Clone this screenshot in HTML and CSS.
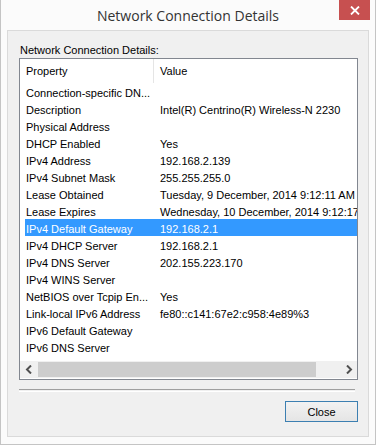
FILE: index.html
```html
<!DOCTYPE html>
<html lang="en">
<head>
  <meta charset="UTF-8" />
  <title>Network Connection Details</title>
  <link rel="stylesheet" href="styles.css">
</head>
<body>
  <div class="window">

    <!-- Title bar -->
    <div class="titlebar">
      <span class="title">Network Connection Details</span>
      <div class="close-x">
        <svg width="10" height="9" viewBox="0 0 10 9"><path d="M1 0.5 L9 8.5 M9 0.5 L1 8.5" stroke="#fff" stroke-width="1.8"/></svg>
      </div>
    </div>

    <!-- Client area -->
    <div class="client">
      <div class="label">Network Connection Details:</div>

      <div class="listview">
        <div class="lv-header">
          <div class="col-prop">Property</div>
          <div class="col-val">Value</div>
        </div>
        <div class="lv-body">
          <div class="row"><div class="col-prop">Connection-specific DN...</div><div class="col-val"></div></div>
          <div class="row"><div class="col-prop">Description</div><div class="col-val">Intel(R) Centrino(R) Wireless-N 2230</div></div>
          <div class="row"><div class="col-prop">Physical Address</div><div class="col-val"></div></div>
          <div class="row"><div class="col-prop">DHCP Enabled</div><div class="col-val">Yes</div></div>
          <div class="row"><div class="col-prop">IPv4 Address</div><div class="col-val">192.168.2.139</div></div>
          <div class="row"><div class="col-prop">IPv4 Subnet Mask</div><div class="col-val">255.255.255.0</div></div>
          <div class="row"><div class="col-prop">Lease Obtained</div><div class="col-val">Tuesday, 9 December, 2014 9:12:11 AM</div></div>
          <div class="row"><div class="col-prop">Lease Expires</div><div class="col-val">Wednesday, 10 December, 2014 9:12:17</div></div>
          <div class="row selected"><div class="col-prop">IPv4 Default Gateway</div><div class="col-val">192.168.2.1</div></div>
          <div class="row"><div class="col-prop">IPv4 DHCP Server</div><div class="col-val">192.168.2.1</div></div>
          <div class="row"><div class="col-prop">IPv4 DNS Server</div><div class="col-val">202.155.223.170</div></div>
          <div class="row"><div class="col-prop">IPv4 WINS Server</div><div class="col-val"></div></div>
          <div class="row"><div class="col-prop">NetBIOS over Tcpip En...</div><div class="col-val">Yes</div></div>
          <div class="row"><div class="col-prop">Link-local IPv6 Address</div><div class="col-val">fe80::c141:67e2:c958:4e89%3</div></div>
          <div class="row"><div class="col-prop">IPv6 Default Gateway</div><div class="col-val"></div></div>
          <div class="row"><div class="col-prop">IPv6 DNS Server</div><div class="col-val"></div></div>
        </div>
        <div class="hscroll">
          <div class="sb-btn">
            <svg width="8" height="9" viewBox="0 0 8 9"><path d="M6 0.5 L2 4.5 L6 8.5" stroke="#505050" stroke-width="2" fill="none"/></svg>
          </div>
          <div class="sb-track"><div class="sb-thumb"></div></div>
          <div class="sb-btn">
            <svg width="8" height="9" viewBox="0 0 8 9"><path d="M2 0.5 L6 4.5 L2 8.5" stroke="#505050" stroke-width="2" fill="none"/></svg>
          </div>
        </div>
      </div>

      <div class="separator"></div>

      <div class="buttons">
        <button class="btn-close">Close</button>
      </div>
    </div>

  </div>
</body>
</html>
```

FILE: styles.css
```css
body {
  margin: 0;
  padding: 0;
  background-color: #ffffff;
  font-family: "Liberation Sans", Arial, sans-serif;
  font-size: 11px;
  color: #000;
}

.window {
  width: 376px;
  height: 445px;
  box-sizing: border-box;
  border-left: 1px solid #c4c4c4;
  border-right: 1px solid #c4c4c4;
  border-bottom: 1px solid #c4c4c4;
  background-color: #fbfbfb;
  padding: 0 6px 0 6px;
  display: flex;
  flex-direction: column;
}

/* Title bar */
.titlebar {
  height: 30px;
  position: relative;
  display: flex;
  justify-content: center;
  align-items: center;
}

.title {
  font-family: "Open Sans", "Liberation Sans", sans-serif;
  font-size: 14px;
  color: #333;
  padding-top: 1px;
}

.close-x {
  position: absolute;
  top: 0;
  right: -1px;
  width: 31px;
  height: 20px;
  background-color: #c75050;
  display: flex;
  justify-content: center;
  align-items: center;
}

/* Client */
.client {
  height: 407px;
  box-sizing: border-box;
  background-color: #f0f0f0;
  border: 1px solid #dadada;
  padding: 0 10px 0 11px;
  display: flex;
  flex-direction: column;
}

.label {
  margin-top: 12px;
  height: 15px;
  line-height: 15px;
  padding-left: 1px;
}

.listview {
  height: 322px;
  box-sizing: border-box;
  border: 1px solid #828790;
  background-color: #fff;
  display: flex;
  flex-direction: column;
}

.lv-header {
  height: 24px;
  display: flex;
  align-items: center;
}

.lv-header .col-prop {
  border-right: 1px solid #e5e5e5;
  height: 24px;
  line-height: 24px;
  box-sizing: border-box;
}

.col-prop {
  width: 134px;
  padding-left: 6px;
  box-sizing: border-box;
  white-space: nowrap;
  overflow: hidden;
  flex-shrink: 0;
}

.col-val {
  padding-left: 6px;
  white-space: nowrap;
  overflow: hidden;
  flex: 1;
}

.lv-body {
  flex: 1;
  overflow: hidden;
  padding-left: 5px;
}

.lv-body .col-prop {
  width: 129px;
  padding-left: 1px;
}

.row {
  height: 17px;
  line-height: 20px;
  display: flex;
}

.row.selected {
  background-color: #3399ff;
  color: #fff;
}

/* Horizontal scrollbar */
.hscroll {
  height: 17px;
  display: flex;
  background-color: #f0f0f0;
  margin-bottom: 1px;
}

.sb-btn {
  width: 17px;
  display: flex;
  justify-content: center;
  align-items: center;
}

.sb-track {
  flex: 1;
  padding: 1px 0;
  display: flex;
}

.sb-thumb {
  width: 278px;
  margin-left: 1px;
  background-color: #cdcdcd;
}

.separator {
  margin-top: 9px;
  width: 336px;
  height: 1px;
  border-top: 1px solid #a0a0a0;
  border-bottom: 1px solid #ffffff;
}

.buttons {
  display: flex;
  justify-content: flex-end;
  margin-top: 9px;
}

.btn-close {
  width: 73px;
  height: 21px;
  border: 1px solid #3c7fb1;
  background: linear-gradient(#f2f2f2, #e5e5e5);
  font-family: "Liberation Sans", Arial, sans-serif;
  font-size: 11px;
  color: #000;
  padding: 0;
}
```
